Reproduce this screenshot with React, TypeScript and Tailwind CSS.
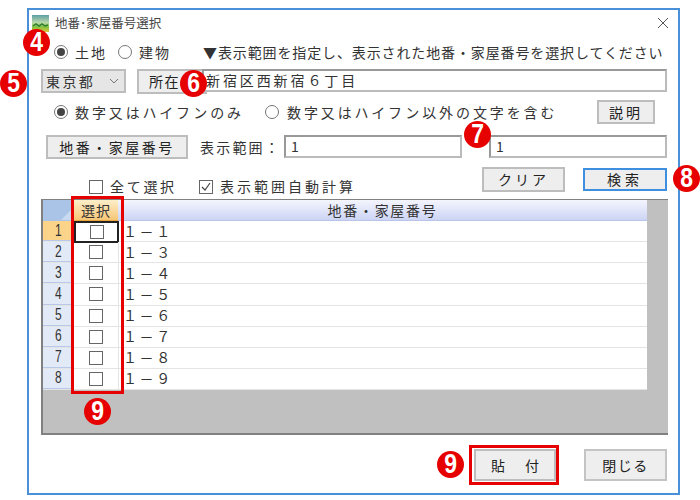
import React from "react";

const FONT = "font-['Noto_Sans_CJK_JP','Noto_Sans_CJK_SC',sans-serif]";

function Radio({ on }: { on?: boolean }) {
  return (
    <span className="flex h-[14px] w-[14px] shrink-0 items-center justify-center rounded-full border border-[#777] bg-white">
      {on && <span className="h-[8px] w-[8px] rounded-full bg-[#444]" />}
    </span>
  );
}

function Check({ on }: { on?: boolean }) {
  return (
    <span className="flex h-[14px] w-[14px] shrink-0 items-center justify-center border border-[#666] bg-white">
      {on && (
        <svg width="12" height="12" viewBox="0 0 12 12" fill="none">
          <path d="M2 6l3 3 5-7" stroke="#444" strokeWidth="1.2" />
        </svg>
      )}
    </span>
  );
}

function Btn({ className, children }: { className: string; children: React.ReactNode }) {
  return (
    <div className={`flex shrink-0 items-center justify-center border-2 bg-[#eeeeee] text-[14px] text-[#222] ${className}`}>
      {children}
    </div>
  );
}

function Badge({ n, className }: { n: string; className: string }) {
  return (
    <div className={`absolute flex h-[27px] w-[27px] items-center justify-center rounded-full bg-[#e60000] font-['Liberation_Sans',sans-serif] text-[27px] leading-none font-bold text-white ${className}`}>
      <span className="inline-block scale-x-[0.85]">{n}</span>
    </div>
  );
}

const rows = [
  ["1", "１－１"],
  ["2", "１－３"],
  ["3", "１－４"],
  ["4", "１－５"],
  ["5", "１－６"],
  ["6", "１－７"],
  ["7", "１－８"],
  ["8", "１－９"],
];

export default function App() {
  return (
    <div className={`relative h-[500px] w-[700px] overflow-hidden bg-white pl-[27px] pt-[8px] text-[#333] ${FONT}`}>
      <div className="flex h-[487px] w-[653px] flex-col border-2 border-[#4a90d9] bg-white">
        {/* Title bar */}
        <div className="flex h-[26px] shrink-0 items-center pl-[3px] pr-[9px]">
          <svg width="17" height="17" viewBox="0 0 17 17" className="shrink-0">
            <defs>
              <linearGradient id="sky" x1="0" y1="0" x2="0" y2="1">
                <stop offset="0" stopColor="#5f9ea8" />
                <stop offset="0.45" stopColor="#b9d8a8" />
                <stop offset="0.7" stopColor="#7fc241" />
                <stop offset="1" stopColor="#e0c63a" />
              </linearGradient>
            </defs>
            <rect width="17" height="17" fill="url(#sky)" />
            <path d="M1 11l3-2 3 2 3-2 3 2 3-1" stroke="#2f7d32" strokeWidth="1.5" fill="none" />
          </svg>
          <span className="ml-[6px] text-[12.5px] text-[#444]">地番･家屋番号選択</span>
          <svg width="12" height="12" viewBox="0 0 12 12" className="ml-auto" fill="none">
            <path d="M1 1l10 10M11 1L1 11" stroke="#555" strokeWidth="1" />
          </svg>
        </div>

        {/* Type row */}
        <div className="mt-[3px] flex h-[26px] shrink-0 items-center pl-[25px] text-[14px]">
          <Radio on />
          <span className="ml-[7px] w-[34px] tracking-[2px]">土地</span>
          <span className="ml-[9px]"><Radio /></span>
          <span className="ml-[7px] w-[32px] tracking-[2px]">建物</span>
          <span className="ml-[32px] whitespace-nowrap tracking-[0.88px]">▼表示範囲を指定し、表示された地番・家屋番号を選択してください</span>
        </div>

        {/* Address row */}
        <div className="mt-[4px] flex h-[25px] shrink-0 items-start pl-[12px] text-[14px]">
          <div className="flex h-[24px] w-[85px] shrink-0 items-center border-2 border-[#bdbdbd] bg-[#e6e6e6] pl-[3px] tracking-[2.4px]">
            東京都
            <svg width="10" height="6" viewBox="0 0 10 6" fill="none" className="ml-[14px]">
              <path d="M1 1l4 4 4-4" stroke="#777" />
            </svg>
          </div>
          <Btn className="ml-[11px] h-[25px] w-[70px] justify-start border-[#bdbdbd] pl-[10px] tracking-[1.5px]">所在</Btn>
          <div className="-ml-[5px] flex h-[23px] w-[465px] shrink-0 items-center border-2 border-t-[#999] border-r-[#bbb] border-b-[#bbb] border-l-[#999] bg-white pl-[2px] tracking-[2.9px]">
            新宿区西新宿６丁目
          </div>
        </div>

        {/* Match row */}
        <div className="mt-[6px] flex h-[24px] shrink-0 items-center pl-[25px] text-[14px]">
          <Radio on />
          <span className="ml-[7px] w-[190px] whitespace-nowrap tracking-[2.9px]">数字又はハイフンのみ</span>
          <Radio />
          <span className="ml-[8px] w-[310px] whitespace-nowrap tracking-[2.9px]">数字又はハイフン以外の文字を含む</span>
          <Btn className="h-[24px] w-[58px] border-[#bdbdbd] tracking-[3px]">説明</Btn>
        </div>

        {/* Range row */}
        <div className="mt-[11px] flex h-[24px] shrink-0 items-start pl-[17px] text-[14px]">
          <Btn className="h-[24px] w-[142px] border-[#bdbdbd] tracking-[2.5px]">地番・家屋番号</Btn>
          <span className="ml-[12px] w-[84px] whitespace-nowrap leading-[24px] tracking-[2.2px]">表示範囲：</span>
          <div className="flex h-[23px] w-[178px] shrink-0 items-center border-2 border-t-[#999] border-r-[#bbb] border-b-[#bbb] border-l-[#999] pl-[5px]">1</div>
          <div className="ml-[27px] flex h-[23px] w-[178px] shrink-0 items-center border-2 border-t-[#999] border-r-[#bbb] border-b-[#bbb] border-l-[#999] pl-[5px]">1</div>
        </div>

        {/* Options row */}
        <div className="mt-[8px] flex h-[25px] shrink-0 items-start pl-[60px] text-[14px]">
          <div className="mt-[9px] flex items-center">
            <Check />
            <span className="ml-[7px] w-[89px] whitespace-nowrap tracking-[2.7px]">全て選択</span>
            <Check on />
            <span className="ml-[7px] w-[140px] whitespace-nowrap tracking-[3px]">表示範囲自動計算</span>
          </div>
          <Btn className="ml-[122px] h-[25px] w-[83px] border-[#bdbdbd] tracking-[3px]">クリア</Btn>
          <Btn className="ml-[18px] mt-[1px] h-[23px] w-[84px] border-[#3f8fe0] tracking-[4px]">検索</Btn>
        </div>

        {/* Grid */}
        <div className="ml-[12px] mt-[7px] h-[236px] w-[627px] shrink-0 border-b-2 border-l-2 border-t border-[#808080] bg-[#c0c0c0]">
          <div className="flex h-[21px] w-[604px]">
            <div className="flex w-[31px] shrink-0 items-end justify-end bg-[#aac4e8]">
              <svg width="12" height="12" viewBox="0 0 12 12" className="mb-[1px] mr-[1px]">
                <path d="M12 0v12H0z" fill="#c9d9f0" />
              </svg>
            </div>
            <div className="flex w-[44px] shrink-0 items-center justify-center border-b border-[#e8a33c] bg-gradient-to-b from-[#fdeec9] to-[#f6c675] text-[14px] tracking-[1px]">選択</div>
            <div className="flex flex-1 items-center justify-center border-b border-[#b8c4e8] bg-gradient-to-b from-[#f4f5fd] to-[#cdd5f5] text-[14px] tracking-[1.7px]">地番・家屋番号</div>
          </div>
          {rows.map(([n, v], i) => (
            <div key={n} className="flex h-[21.125px] w-[604px] border-b border-[#e4e4e4] bg-white">
              <div className={`flex w-[31px] shrink-0 items-center justify-center border-b border-[#b8c8e8] font-['Liberation_Sans',sans-serif] text-[16px] ${i === 0 ? "bg-[#fbd48a]" : "bg-[#e3eaf7]"}`}>
                <span className="inline-block scale-x-[0.75]">{n}</span>
              </div>
              <div className={`flex w-[45px] shrink-0 items-center justify-center ${i === 0 ? "h-[22px] border-2 border-[#222]" : "border-r border-[#e4e4e4]"}`}>
                <Check />
              </div>
              <div className="flex items-center pl-[4px] text-[14px] tracking-[2.6px]">{v}</div>
            </div>
          ))}
        </div>

        {/* Footer */}
        <div className="mt-[14px] flex h-[32px] shrink-0 items-start justify-end pr-[11px] text-[14px]">
          <Btn className="h-[32px] w-[82px] border-[#bdbdbd]">
            <span>貼</span>
            <span className="ml-[20px]">付</span>
          </Btn>
          <Btn className="ml-[28px] h-[32px] w-[83px] border-[#c4c4c4] tracking-[1.5px]">閉じる</Btn>
        </div>
      </div>

      {/* Annotations */}
      <div className="absolute left-[71px] top-[196px] h-[198px] w-[53px] border-[3px] border-[#e60000]" />
      <div className="absolute left-[469px] top-[445px] h-[40px] w-[90px] border-[3px] border-[#e60000]" />
      <Badge n="4" className="left-[23px] top-[29px]" />
      <Badge n="5" className="left-0 top-[70px]" />
      <Badge n="6" className="left-[180px] top-[70px]" />
      <Badge n="7" className="left-[464px] top-[121px]" />
      <Badge n="8" className="left-[673px] top-[165px]" />
      <Badge n="9" className="left-[84px] top-[398px]" />
      <Badge n="9" className="left-[437px] top-[451px]" />
    </div>
  );
}
